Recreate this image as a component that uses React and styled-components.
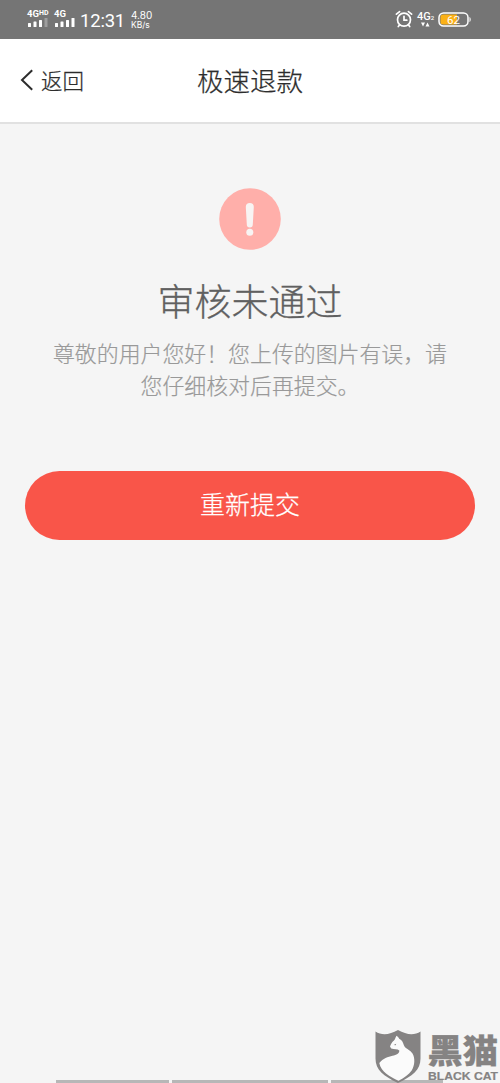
import React from "react";
import styled, { createGlobalStyle } from "styled-components";

const Global = createGlobalStyle`
  * { box-sizing: border-box; }
  body { margin: 0; background: #f5f5f5; }
`;
const Screen = styled.div`
  position: relative;
  width: 500px;
  height: 1083px;
  display: flex;
  flex-direction: column;
  overflow: hidden;
  background: #f5f5f5;
  font-family: "Noto Sans CJK SC", sans-serif;
  font-weight: 300;
`;
const StatusBar = styled.div`
  height: 39px;
  flex: none;
  display: flex;
  justify-content: space-between;
  padding: 0 28px 0 27px;
  background: #757575;
  color: #fff;
  font-family: Roboto, sans-serif;
`;
const StatusGroup = styled.div`
  display: flex;
  align-items: flex-start;
`;
const Signal = styled.div`
  width: ${(p) => p.$width}px;
  padding-top: 9px;
  font: 700 9.5px/9px Roboto, sans-serif;
  white-space: nowrap;
  svg { display: block; margin: 0 0 0 1px; }
  sup { font-size: 7px; line-height: 0; vertical-align: 2px; }
`;
const Clock = styled.div`
  width: 51px;
  padding-top: 11px;
  font: 400 18.5px/21px Roboto, sans-serif;
  letter-spacing: -0.2px;
`;
const Speed = styled.div`
  padding-top: 11px;
  font: 400 10px/9px Inter, sans-serif;
  div + div { font-size: 8.5px; line-height: 10px; }
`;
const AlarmIcon = styled.svg`
  width: 18px;
  height: 18px;
  margin: 10px 4px 0 0;
`;
const Network = styled.div`
  width: 21px;
  padding-top: 11px;
  font: 500 11px/11px Roboto, sans-serif;
  sub { font-size: 6px; line-height: 0; vertical-align: 0; }
  svg { display: block; margin-left: 4px; }
`;
const Battery = styled.svg`
  width: 34px;
  height: 15px;
  margin-top: 12px;
`;
const NavBar = styled.header`
  height: 85px;
  flex: none;
  display: grid;
  grid-template-columns: 1fr auto 1fr;
  align-items: center;
  padding: 0 20px 2px;
  background: #fff;
  border-bottom: 2px solid #e1e1e1;
  color: #2d2d2d;
  -webkit-text-stroke: 0.25px currentColor;
`;
const Back = styled.div`
  display: flex;
  align-items: center;
  gap: 7px;
  font-size: 21.5px;
  line-height: 32px;
`;
const Title = styled.h1`
  margin: 0;
  font-size: 26.5px;
  line-height: 40px;
  font-weight: 300;
`;
const Result = styled.main`
  flex: 1;
  display: flex;
  flex-direction: column;
  align-items: center;
  padding: 64px 25px 0;
`;
const Heading = styled.h2`
  margin: 25px 0 0;
  font-size: 37px;
  line-height: 50px;
  font-weight: 300;
  color: #606060;
  -webkit-text-stroke: 0.3px currentColor;
`;
const Message = styled.p`
  margin: 12px 0 0;
  width: 400px;
  font-size: 21.9px;
  line-height: 32px;
  text-align: center;
  color: #999;
  -webkit-text-stroke: 0.2px currentColor;
`;
const Submit = styled.button`
  width: 450px;
  height: 69px;
  margin-top: 70px;
  padding: 0 0 5px;
  border: 0;
  border-radius: 35px;
  background: #f95549;
  color: #fff;
  font: 300 25px/36px "Noto Sans CJK SC", sans-serif;
  -webkit-text-stroke: 0.25px currentColor;
`;
const GestureRow = styled.footer`
  flex: none;
  display: flex;
  gap: 3px;
  height: 3px;
  padding-left: 56px;
`;
const Gesture = styled.div`
  width: ${(p) => p.$width}px;
  background: #b7b7b7;
`;
const Watermark = styled.svg`
  position: absolute;
  right: 0;
  bottom: 0;
  width: 128px;
  height: 65px;
`;

function Bars({ faded }) {
  return (
    <svg width="21" height="9" fill="#fff">
      <rect x="0" y="5" width="3" height="4" rx=".5" />
      <rect x="5.5" y="3.5" width="3" height="5.5" rx=".5" />
      <rect x="11" y="2" width="3" height="7" rx=".5" />
      <rect x="16.5" y="0" width="3" height="9" rx=".5" opacity={faded ? 0.3 : 1} />
    </svg>
  );
}

export default function App() {
  return (
    <Screen>
      <Global />
      <StatusBar>
        <StatusGroup>
          <Signal $width={27}>4G<sup>HD</sup><Bars faded /></Signal>
          <Signal $width={26}>4G<Bars /></Signal>
          <Clock>12:31</Clock>
          <Speed><div>4.80</div><div>KB/s</div></Speed>
        </StatusGroup>
        <StatusGroup>
          <AlarmIcon viewBox="0 0 18 18" fill="none" stroke="#fff" strokeWidth="1.7" strokeLinecap="round">
            <circle cx="9" cy="9.7" r="6.5" />
            <path d="M1.4 4.2 4.6 1.6M16.6 4.2 13.4 1.6M9 6.3v3.9h2.8M4.5 15 3.3 16.5M13.5 15l1.2 1.5" />
          </AlarmIcon>
          <Network>
            4G<sub>2</sub>
            <svg width="9" height="5" fill="#fff"><path d="M0 .5h4L2 4.5zM4.5 4.5h4l-2-4z" /></svg>
          </Network>
          <Battery viewBox="0 0 34 15">
            <path d="M5 2.5h14v10H5a2.5 2.5 0 0 1-2.500-2.500V5A2.500 2.500 0 0 1 5 2.500z" fill="#fbb116" />
            <rect x="1" y="1" width="29" height="13" rx="4.5" fill="none" stroke="#fff" strokeWidth="1.5" />
            <path d="M31.500 5c1.600.6 1.600 4.400 0 5z" fill="#fff" />
            <text x="15.5" y="11.5" fill="#fff" fontFamily="Roboto, sans-serif" fontWeight="400" fontSize="11.5" textAnchor="middle">62</text>
          </Battery>
        </StatusGroup>
      </StatusBar>
      <NavBar>
        <Back>
          <svg width="14" height="22" fill="none" stroke="#2d2d2d" strokeWidth="2"><path d="M12.2 1.2 2 11l10.2 9.8" /></svg>
          返回
        </Back>
        <Title>极速退款</Title>
      </NavBar>
      <Result>
        <svg width="62" height="62" viewBox="0 0 62 62">
          <circle cx="31" cy="31" r="30.8" fill="#ffafaa" />
          <path d="M26.8 19a4 4 0 0 1 8 0l-1 17.5a3 3 0 0 1-6 0z" fill="#f8f4f3" />
          <circle cx="30.8" cy="44.3" r="3.5" fill="#f8f4f3" />
        </svg>
        <Heading>审核未通过</Heading>
        <Message>尊敬的用户您好！您上传的图片有误，请<br />您仔细核对后再提交。</Message>
        <Submit>重新提交</Submit>
      </Result>
      <GestureRow>
        <Gesture $width={113} />
        <Gesture $width={156} />
        <Gesture $width={112} />
      </GestureRow>
      <Watermark viewBox="372 1018 128 65">
        <path d="M375.5 1031.5c6 4 14 3.5 22.5-1.5 8.5 5 16.5 5.5 22.5 1.5v27c0 11.5-8 17.5-22.5 24.5C383.5 1076 375.5 1070 375.5 1058.5z" fill="#858383" />
        <path d="M396.5 1035.7C398 1036.5 398.8 1037.8 399.2 1038.7 402.3 1040 403 1042.5 404 1045.5 405.5 1049 410 1049.500 412.500 1053.500 415.200 1058 414.900 1065.500 411.700 1070.500 408.500 1075 404.500 1077.500 398.500 1080.800 390 1076.500 381 1072 379.300 1063 383 1058.500 388 1056.800 392.500 1055.800 396.500 1054.900 399.500 1053.500 399.300 1050.500 397.500 1048.800 394.500 1049.300 391.200 1048.500L390 1046.500C391 1044 391.800 1042.300 394 1040.500 395.200 1039 395.400 1037.300 396.500 1035.700z" fill="#fbfbfb" />
        <path d="M393.700 1045l2.500-1.200-.5 1.500z" fill="#858383" />
        <g fill="#858383" stroke="#858383">
          <text transform="translate(427.5 1062.5) scale(.98 .9)" fontFamily="Noto Sans CJK SC, sans-serif" fontWeight="900" fontSize="36" strokeWidth=".3">黑猫</text>
          <text x="428" y="1080" fontFamily="Liberation Sans, sans-serif" fontWeight="700" fontSize="11.3" strokeWidth=".2" textLength="70" lengthAdjust="spacingAndGlyphs">BLACK CAT</text>
        </g>
      </Watermark>
    </Screen>
  );
}
